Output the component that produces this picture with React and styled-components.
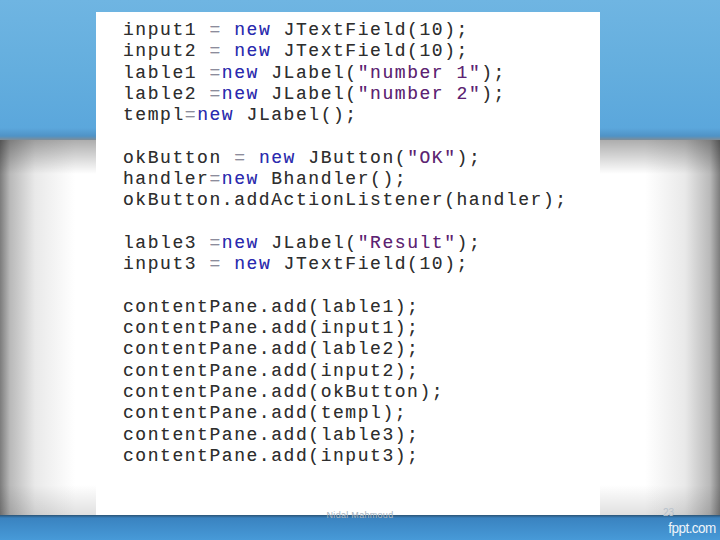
import styled, { createGlobalStyle } from "styled-components";

const GlobalStyle = createGlobalStyle`
  html, body {
    margin: 0;
    padding: 0;
    background: #ffffff;
  }
`;

const code = [
  [["input1 "], ["=", "op"], [" "], ["new", "kw"], [" JTextField(10);"]],
  [["input2 "], ["=", "op"], [" "], ["new", "kw"], [" JTextField(10);"]],
  [["lable1 "], ["=", "op"], ["new", "kw"], [" JLabel("], ['"number 1"', "str"], [");"]],
  [["lable2 "], ["=", "op"], ["new", "kw"], [" JLabel("], ['"number 2"', "str"], [");"]],
  [["templ"], ["=", "op"], ["new", "kw"], [" JLabel();"]],
  [],
  [["okButton "], ["=", "op"], [" "], ["new", "kw"], [" JButton("], ['"OK"', "str"], [");"]],
  [["handler"], ["=", "op"], ["new", "kw"], [" Bhandler();"]],
  [["okButton.addActionListener(handler);"]],
  [],
  [["lable3 "], ["=", "op"], ["new", "kw"], [" JLabel("], ['"Result"', "str"], [");"]],
  [["input3 "], ["=", "op"], [" "], ["new", "kw"], [" JTextField(10);"]],
  [],
  [["contentPane.add(lable1);"]],
  [["contentPane.add(input1);"]],
  [["contentPane.add(lable2);"]],
  [["contentPane.add(input2);"]],
  [["contentPane.add(okButton);"]],
  [["contentPane.add(templ);"]],
  [["contentPane.add(lable3);"]],
  [["contentPane.add(input3);"]],
];

const App = () => {
  return (
    <>
      <GlobalStyle />
      <Slide>
        <CodePanel>
          {code.map((line, i) => (
            <CodeLine key={i}>
              {line.length === 0
                ? "\u00a0"
                : line.map(([text, kind], j) => (
                    <Token key={j} $kind={kind}>
                      {text}
                    </Token>
                  ))}
            </CodeLine>
          ))}
        </CodePanel>
        <Footer>
          <span />
          <Caption>Nidal Mahmoud</Caption>
          <FooterRight>
            <PageNumber>23</PageNumber>
            <Brand>fppt.com</Brand>
          </FooterRight>
        </Footer>
      </Slide>
    </>
  );
};

export default App;

const tokenColors = {
  kw: "#2a2ab4",
  str: "#5e2274",
  op: "#8c8c9c",
};

const Slide = styled.div`
  width: 720px;
  height: 540px;
  overflow: hidden;
  display: flex;
  flex-direction: column;
  background:
    linear-gradient(
        to bottom,
        #6fb5e2 0px,
        #64aede 70px,
        #5ba7dc 128px,
        #4f93c6 136px,
        #7f8c96 140px
      )
      top / 100% 140px no-repeat,
    linear-gradient(to bottom, #2b5476 0px, #3a83c0 3px, #479ad8 25px) bottom /
      100% 25px no-repeat,
    linear-gradient(to bottom, rgba(0, 0, 0, 0.32) 0px, rgba(0, 0, 0, 0) 34px)
      0 140px / 100% 40px no-repeat,
    linear-gradient(to top, rgba(0, 0, 0, 0.12) 0px, rgba(0, 0, 0, 0) 30px) 0
      485px / 100% 30px no-repeat,
    linear-gradient(
      to right,
      #7c7c7c 0px,
      #b9b9b9 10px,
      #e9e9e9 35px,
      #ffffff 75px,
      #ffffff 645px,
      #e9e9e9 685px,
      #b9b9b9 710px,
      #7c7c7c 720px
    );
`;

const CodePanel = styled.div`
  margin: 12px 0 0 96px;
  width: 504px;
  height: 503px;
  box-sizing: border-box;
  padding: 8px 0 0 27px;
  background: #ffffff;
`;

const CodeLine = styled.div`
  font-family: "Liberation Mono", "Courier New", monospace;
  font-size: 18px;
  letter-spacing: 1.55px;
  line-height: 21.3px;
  height: 21.3px;
  white-space: pre;
  color: #2e2e2e;
  text-shadow: 0 0 0.6px rgba(0, 0, 0, 0.3);
`;

const Token = styled.span`
  color: ${({ $kind }) => tokenColors[$kind] || "inherit"};
`;

const Footer = styled.div`
  flex: 1;
  margin-top: -8px;
  display: grid;
  grid-template-columns: 1fr auto 1fr;
  align-items: start;
`;

const Caption = styled.div`
  margin-top: 3px;
  font-family: "Liberation Sans", Arial, sans-serif;
  font-size: 9px;
  color: #a9b4be;
  letter-spacing: 0.3px;
`;

const FooterRight = styled.div`
  display: flex;
  flex-direction: column;
  align-items: flex-end;
  padding-right: 4px;
`;

const PageNumber = styled.div`
  margin-right: 42px;
  font-family: "Liberation Sans", Arial, sans-serif;
  font-size: 10px;
  line-height: 12px;
  color: #b8c2cc;
`;

const Brand = styled.div`
  font-family: "Liberation Sans", Arial, sans-serif;
  font-size: 15px;
  line-height: 18px;
  letter-spacing: -0.6px;
  transform: scaleX(0.9);
  transform-origin: right;
  color: #eef4fa;
`;
